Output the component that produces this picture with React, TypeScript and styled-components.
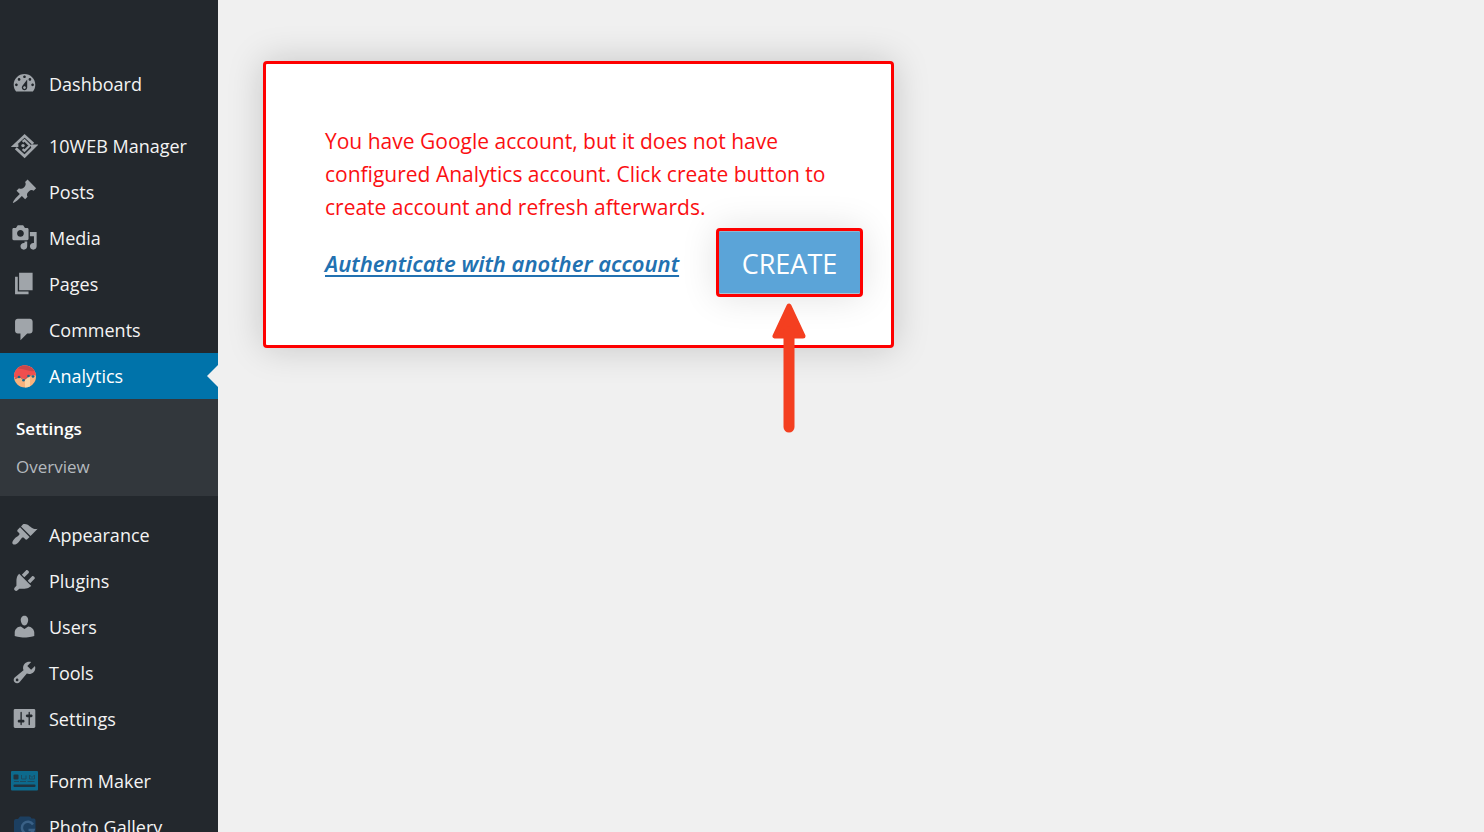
import React from 'react';
import styled, { createGlobalStyle } from 'styled-components';

const GlobalStyle = createGlobalStyle`
  *, *::before, *::after { box-sizing: border-box; }
  body {
    margin: 0;
    background: #f0f0f0;
    font-family: "Segoe UI", "Open Sans", "Noto Sans", sans-serif;
  }
`;

const Page = styled.div`
  display: flex;
  height: 100vh;
  overflow: hidden;
`;

const Sidebar = styled.nav`
  flex: none;
  width: 218px;
  padding-top: 61px;
  overflow: hidden;
  background: #23282d;
`;

const MenuList = styled.ul`
  list-style: none;
  margin: 0;
  padding: 0;
`;

const MenuItem = styled.li<{ $gap?: boolean }>`
  margin-top: ${(p) => (p.$gap ? 16 : 0)}px;
`;

const MenuLink = styled.a<{ $active?: boolean }>`
  position: relative;
  display: flex;
  align-items: center;
  height: 46px;
  font-size: 18px;
  line-height: 24px;
  text-decoration: none;
  color: ${(p) => (p.$active ? '#fff' : '#f4f4f4')};
  background: ${(p) => (p.$active ? '#0073aa' : 'transparent')};

  &::after {
    content: "";
    display: ${(p) => (p.$active ? 'block' : 'none')};
    position: absolute;
    right: 0;
    top: 12px;
    border: 11px solid transparent;
    border-left-width: 0;
    border-right-color: #f0f0f0;
  }
`;

const IconSlot = styled.span`
  display: flex;
  flex: none;
  justify-content: center;
  width: 49px;
  padding-bottom: 2px;
  color: #a0a5aa;

  svg { display: block; width: 27px; height: 27px; }
`;

const SubMenu = styled.ul`
  list-style: none;
  margin: 0;
  padding: 11px 0 10px;
  background: #32373c;
`;

const SubLink = styled.a<{ $current?: boolean }>`
  display: block;
  padding: 0 16px;
  font-size: 17px;
  line-height: 38px;
  text-decoration: none;
  font-weight: ${(p) => (p.$current ? 600 : 400)};
  color: ${(p) => (p.$current ? '#fff' : '#b4b9be')};
`;

const Content = styled.main`
  flex: 1;
  min-width: 0;
  padding: 61px 45px;
`;

const Card = styled.section`
  max-width: 631px;
  padding: 61px 28px 48px 59px;
  border: 3px solid #fe0000;
  border-radius: 4px;
  background: #fff;
  box-shadow: 0 0 36px rgba(0, 0, 0, 0.18);
`;

const Message = styled.p`
  max-width: 510px;
  margin: 0;
  font-size: 21px;
  line-height: 33px;
  color: #fb0f12;
`;

const Actions = styled.div`
  display: flex;
  align-items: center;
  justify-content: space-between;
  margin-top: 4px;
`;

const AuthLink = styled.a`
  font-family: "Segoe UI", "Noto Sans", sans-serif;
  font-size: 22px;
  line-height: 32px;
  font-style: italic;
  font-weight: 600;
  color: #2271b1;
  text-decoration-thickness: 2px;
  text-underline-offset: 3px;
  text-decoration-skip-ink: none;
`;

const CreateWrap = styled.div`
  position: relative;
  flex: none;
`;

const CreateButton = styled.button`
  display: block;
  width: 147px;
  height: 69px;
  padding: 2px 0 0;
  border: 3px solid #fe0000;
  border-radius: 4px;
  background: #5ba4d8;
  box-shadow: 0 0 36px rgba(0, 0, 0, 0.12), inset 0 1px #8fb6d2, inset 0 -1px #a9c3d6;
  font-family: inherit;
  font-size: 27px;
  font-weight: 400;
  line-height: 36px;
  color: #fff;
`;

const Pointer = styled.svg`
  position: absolute;
  top: 74px;
  left: 55px;
  width: 36px;
  height: 132px;
`;

function Dashicon({ d }: { d: string }) {
  return (
    <svg viewBox="0 0 20 20" fill="currentColor" fillRule="evenodd" aria-hidden="true">
      <path d={d} />
    </svg>
  );
}

const TenWebIcon = () => (
  <svg viewBox="0 0 27 27" fill="none" stroke="currentColor" strokeWidth="2.8" aria-hidden="true">
    <path d="M7.400 13.600H3.200L13.600 3.800 22.200 11.800" />
    <path d="M4.800 16.200 13.600 24.200 24 14H20" />
    <path d="M11.600 9.800l1.900-1.600 5.300 5.400-5.300 5.200-1.900-1.700" strokeWidth="2.200" />
    <circle cx="12" cy="13.600" r="1.700" fill="currentColor" stroke="none" />
  </svg>
);

const AnalyticsIcon = () => (
  <svg viewBox="0 0 27 27" aria-hidden="true">
    <circle cx="14" cy="14.500" r="11" fill="#f9b27c" />
    <path d="M14 18 19 14V24.300A11 11 0 0 1 14 25.500Z" fill="#fcd3a4" />
    <path d="M3 15a11 11 0 0 1 22-1.500l-5-.5-6 4.500-5-2.500-3.500 1.500Z" fill="#f04e4e" />
    <path d="M6.500 6.500q5 0 8.500 1.500t8.500 1A11 11 0 0 0 6.500 6.500Z" fill="#c8474b" />
    <path d="M3.500 17 8.500 14.800 13 18 18 13.500 23.500 14.300" fill="none" stroke="#a9615f" strokeWidth="1" />
    <g fill="#17688f">
      <circle cx="8" cy="15" r="1.300" />
      <circle cx="12.500" cy="18.200" r="1.300" />
      <circle cx="17.500" cy="14" r="1.300" />
      <circle cx="22" cy="14.500" r="1.300" />
    </g>
  </svg>
);

const FormMakerIcon = () => (
  <svg viewBox="0 0 27 27" aria-hidden="true">
    <rect x="0" y="4" width="27" height="19.500" rx="1" fill="#0d6a8d" />
    <rect x="2.500" y="7.500" width="5" height="5" rx="1" fill="#23343f" />
    <g fill="none" stroke="#1d4b60" strokeWidth="1">
      <path d="M10.500 8v4h4.500V8.500M18.500 8v4h5V8l-2.500 2.500Z" />
      <path d="M3 14.500h5M9 14.500h6M16.500 14.500h7" />
    </g>
    <rect x="2.500" y="17.500" width="22" height="2.500" rx="1" fill="#20323e" />
  </svg>
);

const PhotoGalleryIcon = () => (
  <svg viewBox="0 0 27 27" aria-hidden="true">
    <path d="M3 8q0-2 2-2h2l2-2.500h9q2 0 2.500 2H23q1.500 0 1.500 2V23H5q-2 0-2-2Z" fill="#1c3f60" />
    <path d="M22 11.500a6 6 0 1 0 .5 5.500h-5" fill="none" stroke="#3a6186" strokeWidth="2.400" />
  </svg>
);

type Entry = { label: string; icon: React.ReactNode; gap?: boolean; active?: boolean; children?: string[] };

const entries: Entry[] = [
  {
    label: 'Dashboard',
    icon: <Dashicon d="M3.76 16h12.48c1.1-1.37 1.76-3.11 1.76-5 0-4.42-3.58-8-8-8s-8 3.58-8 8c0 1.89.66 3.63 1.76 5zM10 4c.55 0 1 .45 1 1s-.45 1-1 1-1-.45-1-1 .45-1 1-1zM6 6c.55 0 1 .45 1 1s-.45 1-1 1-1-.45-1-1 .45-1 1-1zm8 0c.55 0 1 .45 1 1s-.45 1-1 1-1-.45-1-1 .45-1 1-1zm-5.37 5.55L12 7v6c0 1.1-.9 2-2 2s-2-.9-2-2c0-.57.24-1.08.63-1.45zM4 10c.55 0 1 .45 1 1s-.45 1-1 1-1-.45-1-1 .45-1 1-1zm12 0c.55 0 1 .45 1 1s-.45 1-1 1-1-.45-1-1 .45-1 1-1zm-5 3c0-.55-.45-1-1-1s-1 .45-1 1 .45 1 1 1 1-.45 1-1z" />,
  },
  { label: '10WEB Manager', gap: true, icon: <TenWebIcon /> },
  {
    label: 'Posts',
    icon: <Dashicon d="M10.44 3.02l1.82-1.82 6.36 6.35-1.83 1.82c-1.05-.68-2.48-.57-3.41.36l-.75.75c-.92.93-1.04 2.35-.35 3.41l-1.83 1.82-2.41-2.41-2.8 2.79c-.42.42-3.38 2.71-3.8 2.29s1.86-3.39 2.28-3.81l2.79-2.79L4.1 9.36l1.83-1.82c1.05.69 2.48.57 3.4-.36l.75-.75c.93-.92 1.05-2.35.36-3.41z" />,
  },
  {
    label: 'Media',
    icon: <Dashicon d="M13 11V4c0-.55-.45-1-1-1h-1.67L9 1H5L3.67 3H2c-.55 0-1 .45-1 1v7c0 .55.45 1 1 1h10c.55 0 1-.45 1-1zM7 4.500c1.38 0 2.500 1.120 2.500 2.500S8.380 9.500 7 9.500 4.500 8.380 4.500 7 5.620 4.500 7 4.500zM14 6h5v10.500c0 1.380-1.120 2.500-2.500 2.500S14 17.880 14 16.500s1.120-2.500 2.500-2.500c.17 0 .34.02.5.05V9h-3V6zm-4 8.050V13h2v3.500c0 1.380-1.120 2.500-2.500 2.500S7 17.880 7 16.500 8.120 14 9.500 14c.17 0 .34.02.5.05z" />,
  },
  { label: 'Pages', icon: <Dashicon d="M6 15V2h10v13H6zm-1 1h8v2H3V5h2v11z" /> },
  {
    label: 'Comments',
    icon: <Dashicon d="M5 2h9c1.1 0 2 .9 2 2v7c0 1.1-.9 2-2 2h-2l-5 5v-5H5c-1.1 0-2-.9-2-2V4c0-1.1.9-2 2-2z" />,
  },
  { label: 'Analytics', active: true, icon: <AnalyticsIcon />, children: ['Settings', 'Overview'] },
  {
    label: 'Appearance',
    gap: true,
    icon: <Dashicon d="M14.48 11.06L7.41 3.99l1.5-1.5c.5-.56 2.3-.47 3.51.32 1.21.8 1.43 1.28 2.91 2.1 1.18.64 2.45 1.26 4.45.85zm-.71.71L6.7 4.7 4.93 6.47c-.39.39-.39 1.02 0 1.41l1.06 1.06c.39.39.39 1.03 0 1.42-.6.6-1.43 1.11-2.21 1.69-.35.26-.7.53-1.01.84C1.43 14.23.4 16.08 1.4 17.07c.99 1 2.84-.03 4.18-1.36.31-.31.58-.66.85-1.02.57-.78 1.08-1.61 1.69-2.21.39-.39 1.02-.39 1.41 0l1.06 1.06c.39.39 1.02.39 1.41 0z" />,
  },
  {
    label: 'Plugins',
    icon: <Dashicon d="M13.11 4.36L9.87 7.6 8 5.73l3.24-3.24c.35-.34 1.05-.2 1.56.32.52.51.66 1.21.31 1.55zm-8 1.77l.91-1.12 9.01 9.01-1.19.84c-.71.71-2.63 1.16-3.82 1.16H6.14L4.9 17.26c-.59.59-1.54.59-2.12 0-.59-.58-.59-1.53 0-2.12l1.24-1.24v-3.88c0-1.13.4-3.19 1.09-3.89zm7.26 3.97l3.24-3.24c.34-.35 1.04-.21 1.55.31.52.51.66 1.21.31 1.55l-3.24 3.25z" />,
  },
  {
    label: 'Users',
    icon: <Dashicon d="M10 9.25c-2.27 0-2.73-3.44-2.73-3.44C7 4.02 7.82 2 9.97 2c2.16 0 2.98 2.02 2.71 3.81 0 0-.41 3.44-2.68 3.44zm0 2.57L12.72 10c2.39 0 4.52 2.33 4.52 4.53v2.49s-3.65 1.13-7.24 1.13c-3.65 0-7.24-1.13-7.24-1.13v-2.49c0-2.25 1.94-4.48 4.47-4.48z" />,
  },
  {
    label: 'Tools',
    icon: <Dashicon d="M16.68 9.77c-1.34 1.34-3.3 1.67-4.95.99l-5.41 6.52c-.99.99-2.59.99-3.58 0s-.99-2.59 0-3.57l6.52-5.42c-.68-1.65-.35-3.61.99-4.95 1.28-1.28 3.12-1.62 4.72-1.06l-2.89 2.89 2.82 2.82 2.86-2.87c.53 1.58.18 3.39-1.08 4.65zM3.81 16.21c.4.39 1.04.39 1.43 0 .4-.4.4-1.04 0-1.43-.39-.4-1.03-.4-1.43 0-.39.39-.39 1.03 0 1.43z" />,
  },
  {
    label: 'Settings',
    icon: <Dashicon d="M18 16V4c0-.55-.45-1-1-1H3c-.55 0-1 .45-1 1v12c0 .55.45 1 1 1h14c.55 0 1-.45 1-1zM8 11h1c.55 0 1 .45 1 1s-.45 1-1 1H8v1.500c0 .28-.22.5-.5.5s-.5-.22-.5-.5V13H6c-.55 0-1-.45-1-1s.45-1 1-1h1V5.500c0-.28.22-.5.5-.5s.5.22.5.5V11zm5-2h-1c-.55 0-1-.45-1-1s.45-1 1-1h1V5.500c0-.28.22-.5.5-.5s.5.22.5.5V7h1c.55 0 1 .45 1 1s-.45 1-1 1h-1v5.500c0 .28-.22.5-.5.5s-.5-.22-.5-.5V9z" />,
  },
  { label: 'Form Maker', gap: true, icon: <FormMakerIcon /> },
  { label: 'Photo Gallery', icon: <PhotoGalleryIcon /> },
];

export default function App() {
  return (
    <Page>
      <GlobalStyle />
      <Sidebar aria-label="Main menu">
        <MenuList>
          {entries.map((e, i) => (
            <MenuItem key={i} $gap={e.gap}>
              <MenuLink href="#" $active={e.active}>
                <IconSlot>{e.icon}</IconSlot>
                {e.label}
              </MenuLink>
              {e.children && (
                <SubMenu>
                  {e.children.map((label, n) => (
                    <li key={label}>
                      <SubLink href="#" $current={n === 0}>{label}</SubLink>
                    </li>
                  ))}
                </SubMenu>
              )}
            </MenuItem>
          ))}
        </MenuList>
      </Sidebar>
      <Content>
        <Card>
          <Message>
            You have Google account, but it does not have configured Analytics account. Click create
            button to create account and refresh afterwards.
          </Message>
          <Actions>
            <AuthLink href="#">Authenticate with another account</AuthLink>
            <CreateWrap>
              <CreateButton type="button">CREATE</CreateButton>
              <Pointer viewBox="0 0 36 132" aria-hidden="true">
                <path
                  d="M18 4 4 34H32Z"
                  fill="#f43f20"
                  stroke="#f43f20"
                  strokeWidth="5"
                  strokeLinejoin="round"
                />
                <path d="M18 30V125" stroke="#f43f20" strokeWidth="11" strokeLinecap="round" />
              </Pointer>
            </CreateWrap>
          </Actions>
        </Card>
      </Content>
    </Page>
  );
}
